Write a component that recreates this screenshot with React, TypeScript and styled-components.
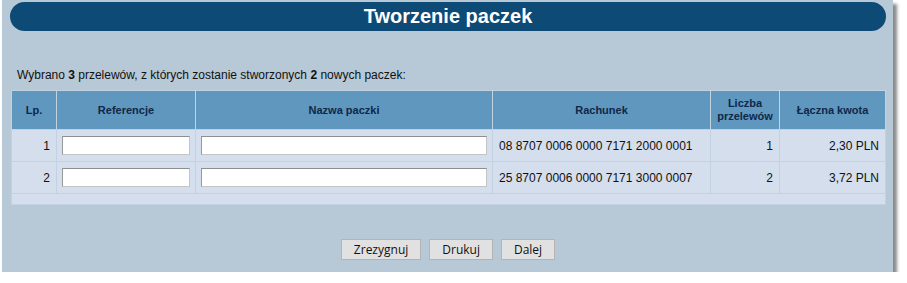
import React from 'react';
import styled, { createGlobalStyle } from 'styled-components';

const GlobalStyle = createGlobalStyle`
  * {
    margin: 0;
    padding: 0;
    box-sizing: border-box;
  }

  body {
    font-family: 'Liberation Sans', Arial, sans-serif;
    font-size: 12px;
    background: #ffffff;
    color: #1a1a1a;
  }
`;

type Row = {
  lp: number;
  account: string;
  count: number;
  amount: string;
};

const rows: Row[] = [
  { lp: 1, account: '08 8707 0006 0000 7171 2000 0001', count: 1, amount: '2,30 PLN' },
  { lp: 2, account: '25 8707 0006 0000 7171 3000 0007', count: 2, amount: '3,72 PLN' },
];

const App: React.FC = () => {
  return (
    <>
      <GlobalStyle />
      <Panel>
        <TitleBar>Tworzenie paczek</TitleBar>

        <Summary>
          Wybrano <b>3</b> przelewów, z których zostanie stworzonych <b>2</b> nowych paczek:
        </Summary>

        <Table>
          <colgroup>
            <col style={{ width: 44 }} />
            <col style={{ width: 138 }} />
            <col style={{ width: 296 }} />
            <col style={{ width: 217 }} />
            <col style={{ width: 68 }} />
            <col />
          </colgroup>
          <thead>
            <tr>
              <Th>Lp.</Th>
              <Th>Referencje</Th>
              <Th>Nazwa paczki</Th>
              <Th>Rachunek</Th>
              <Th>
                Liczba
                <br />
                przelewów
              </Th>
              <Th>Łączna kwota</Th>
            </tr>
          </thead>
          <tbody>
            {rows.map((r) => (
              <tr key={r.lp}>
                <Td $align="right">{r.lp}</Td>
                <InputCell>
                  <TextInput type="text" />
                </InputCell>
                <InputCell>
                  <TextInput type="text" />
                </InputCell>
                <Td>{r.account}</Td>
                <Td $align="right">{r.count}</Td>
                <Td $align="right">{r.amount}</Td>
              </tr>
            ))}
            <tr>
              <FooterCell colSpan={6} />
            </tr>
          </tbody>
        </Table>

        <Buttons>
          <Button>Zrezygnuj</Button>
          <Button>Drukuj</Button>
          <Button>Dalej</Button>
        </Buttons>
      </Panel>
    </>
  );
};

const Panel = styled.div`
  margin-left: 2px;
  width: 891px;
  height: 272px;
  padding: 2px 7px 0 8px;
  background: #b7c8d6;
  box-shadow: 4px 4px 3px rgba(60, 60, 60, 0.6);
  display: flex;
  flex-direction: column;
`;

const TitleBar = styled.div`
  height: 29px;
  border-radius: 15px;
  background: #0d4a75;
  color: #ffffff;
  font-size: 20px;
  font-weight: bold;
  display: flex;
  align-items: center;
  justify-content: center;
`;

const Summary = styled.p`
  margin: 37px 0 0 7px;
  font-size: 12px;
  line-height: 15px;
  color: #111;

  b {
    font-weight: bold;
  }
`;

const Table = styled.table`
  margin: 7px 0 0 1px;
  width: 875px;
  table-layout: fixed;
  border-collapse: separate;
  border-spacing: 1px;
  background: #c3d2e2;
`;

const Th = styled.th`
  height: 38px;
  background: #5f97bf;
  color: #0f2748;
  font-size: 11px;
  font-weight: bold;
  text-align: center;
  line-height: 13px;
`;

const Td = styled.td<{ $align?: 'left' | 'right' }>`
  height: 31px;
  padding: 0 6px;
  background: #d5deec;
  font-size: 12px;
  color: #111;
  text-align: ${({ $align }) => $align || 'left'};
  white-space: nowrap;
`;

const InputCell = styled.td`
  height: 31px;
  padding: 0 5px;
  background: #d5deec;
`;

const TextInput = styled.input`
  display: block;
  width: 100%;
  height: 19px;
  background: #ffffff;
  border: 1px solid #c4c4c4;
  border-top-color: #8e8e8e;
  border-left-color: #9a9a9a;
  font-family: 'Liberation Sans', Arial, sans-serif;
  font-size: 12px;
`;

const FooterCell = styled.td`
  height: 10px;
  background: #d5deec;
`;

const Buttons = styled.div`
  margin-top: 34px;
  display: flex;
  justify-content: center;
  gap: 8px;
`;

const Button = styled.button`
  height: 21px;
  padding: 0 12px;
  background: #e1e1e1;
  border: 1px solid #b4b4b4;
  font-family: 'Open Sans', 'Liberation Sans', sans-serif;
  font-size: 12px;
  color: #111;
`;

export default App;
